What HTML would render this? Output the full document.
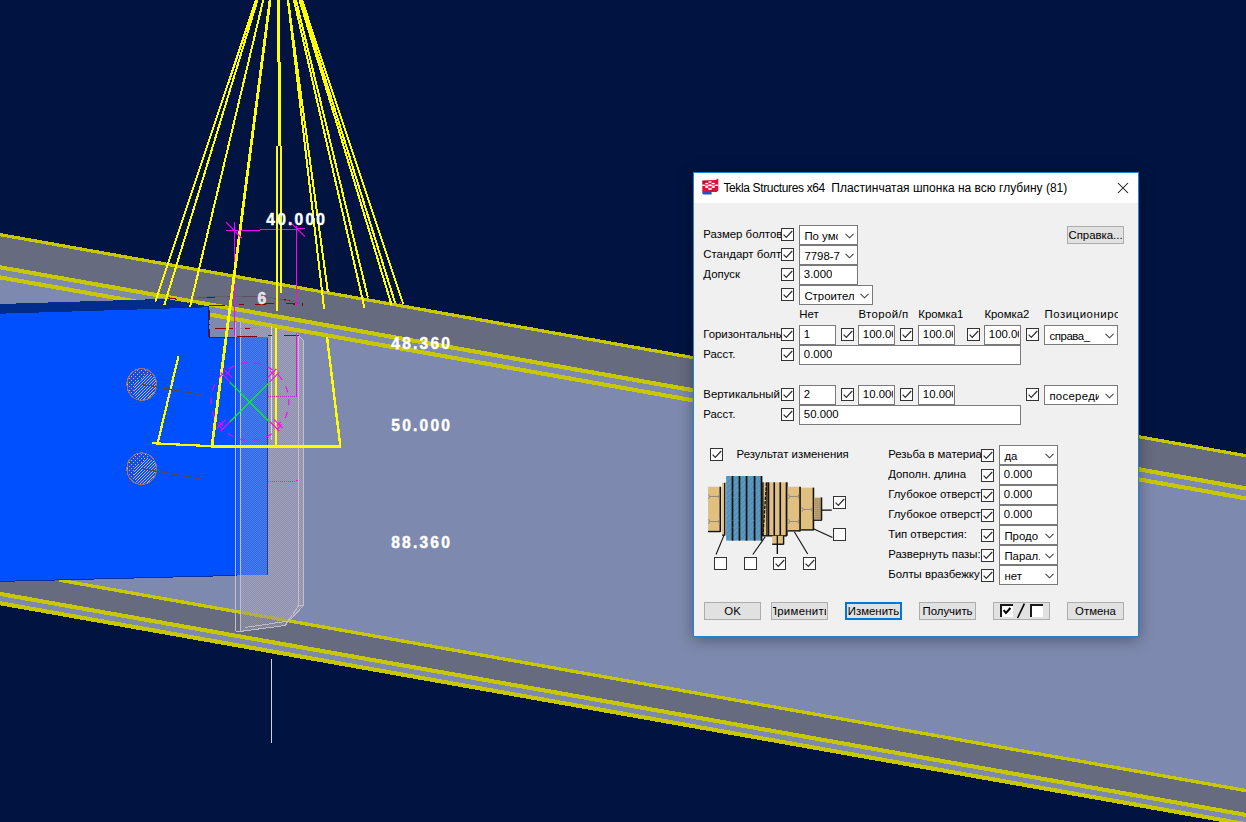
<!DOCTYPE html>
<html><head><meta charset="utf-8"><title>Tekla Structures</title>
<style>
html,body{margin:0;padding:0;}
body{width:1246px;height:822px;overflow:hidden;background:#001341;position:relative;font-family:"Liberation Sans",sans-serif;}
.dim{position:absolute;font:bold 15.6px "Liberation Sans",sans-serif;color:#fff;letter-spacing:2.2px;line-height:18px;white-space:nowrap;-webkit-text-stroke:0.45px #fff;}

.win{position:absolute;left:693px;top:172px;width:444px;height:463px;border:1px solid #1a84d8;background:#f0f0f0;box-shadow:0 3px 14px 0 rgba(0,0,0,0.34);}
.tbar{position:absolute;left:694px;top:173px;width:444px;height:30px;background:#fff;}
.title{position:absolute;left:723.4px;top:180.8px;font-size:12px;line-height:15px;color:#000;white-space:nowrap;transform:scaleY(1.06);transform-origin:0 11.5px;}
.lbl{position:absolute;font-size:11.4px;line-height:14px;height:15px;color:#000;white-space:nowrap;overflow:hidden;}
.cb{position:absolute;width:11px;height:11px;border:1px solid #333;background:#fff;}
.inp{position:absolute;border:1px solid #7a7a7a;background:#fff;font-size:11.4px;color:#000;white-space:nowrap;overflow:hidden;}
.inp span{position:absolute;left:3.8px;top:0.9px;line-height:14px;height:15px;overflow:hidden;white-space:nowrap;}
.btn{position:absolute;border:1px solid #adadad;background:#e1e1e1;font-size:11.4px;color:#000;text-align:center;white-space:nowrap;overflow:hidden;}
.btn.foc{border:2px solid #0078d7;}

</style></head><body>
<svg width="1246" height="822" viewBox="0 0 1246 822" shape-rendering="crispEdges" style="position:absolute;left:0;top:0">
<defs><pattern id="ckWeb" width="2" height="2" patternUnits="userSpaceOnUse"><rect width="2" height="2" fill="#8c90b0"/><rect x="0" y="0" width="1" height="1" fill="#a3a0ba"/><rect x="1" y="1" width="1" height="1" fill="#a3a0ba"/></pattern><pattern id="ckBlue" width="2" height="2" patternUnits="userSpaceOnUse"><rect width="2" height="2" fill="#2c66ee"/><rect x="0" y="0" width="1" height="1" fill="#4f80e4"/><rect x="1" y="1" width="1" height="1" fill="#4f80e4"/></pattern><pattern id="ckGray" width="2" height="2" patternUnits="userSpaceOnUse"><rect width="2" height="2" fill="#7b7d92"/><rect x="0" y="0" width="1" height="1" fill="#8f8fa2"/><rect x="1" y="1" width="1" height="1" fill="#8f8fa2"/></pattern><pattern id="ckSide" width="2" height="2" patternUnits="userSpaceOnUse"><rect width="2" height="2" fill="#0c54f6"/><rect x="0" y="0" width="1" height="1" fill="#2a62e8"/><rect x="1" y="1" width="1" height="1" fill="#2a62e8"/></pattern><pattern id="ckYel" width="2" height="2" patternUnits="userSpaceOnUse"><rect width="2" height="2" fill="#b8b438"/><rect x="0" y="0" width="1" height="1" fill="#a8a468"/><rect x="1" y="1" width="1" height="1" fill="#a8a468"/></pattern></defs>
<polygon points="0.0,234.7 1246.0,455.7 1246.0,824.2 0.0,603.2" fill="#7d89ae" />
<polygon points="0.0,578.0 59.0,578.0 59.0,580.1 1246.0,790.6 1246.0,814.9 0.0,593.9" fill="#676b80" />
<polygon points="59.0,578.4 1246.0,788.9 1246.0,792.3 59.0,581.8" fill="#c8c800" />
<polygon points="240.5,320.1 295.7,329.9 303.6,340.8 303.6,606.0 289.0,621.0 285.0,625.5 240.5,631.4" fill="url(#ckWeb)" />
<clipPath id="cpPlate"><polygon points="240.5,320.1 295.7,329.9 303.6,340.8 303.6,606.0 289.0,621.0 285.0,625.5 240.5,631.4"/></clipPath>
<g clip-path="url(#cpPlate)">
<polygon points="230.0,610.4 310.0,624.6 310.0,640.0 230.0,640.0" fill="url(#ckGray)" />
<polygon points="230.0,608.7 310.0,622.9 310.0,626.3 230.0,612.1" fill="url(#ckYel)" />
</g>
<polygon points="0.0,275.3 1246.0,496.3 1246.0,500.5 0.0,279.5" fill="#c8c800" />
<polygon points="0.0,304.0 209.0,297.5 209.0,308.0 0.0,314.0" fill="#002c8c" />
<polygon points="0.0,313.7 208.9,307.3 208.9,336.8 237.0,336.8 237.0,575.4 0.0,581.4" fill="#0050ff" />
<line x1="0.0" y1="581.4" x2="237.0" y2="575.4" stroke="#0030a0" stroke-width="1" />
<line x1="208.9" y1="307.0" x2="208.9" y2="337.3" stroke="#002c8c" stroke-width="1" />
<line x1="208.9" y1="337.3" x2="236.0" y2="337.3" stroke="#002c8c" stroke-width="1" />
<polygon points="237.0,337.3 240.5,337.3 240.5,575.3 237.0,575.4" fill="url(#ckSide)" />
<polygon points="240.5,337.3 267.7,337.3 267.7,574.6 240.5,575.3" fill="url(#ckBlue)" />
<line x1="267.5" y1="338.0" x2="267.5" y2="574.6" stroke="#2a3f88" stroke-width="1" />
<polygon points="209.4,312.4 320.0,332.1 320.0,336.3 209.4,316.6" fill="#c8c800" />
<line x1="235.5" y1="322.0" x2="235.5" y2="631.4" stroke="#c4bcc8" stroke-width="1" />
<line x1="240.5" y1="322.0" x2="240.5" y2="631.4" stroke="#c4bcc8" stroke-width="1" />
<line x1="298.8" y1="336.0" x2="298.8" y2="605.5" stroke="#c4bcc8" stroke-width="1" />
<line x1="303.6" y1="340.8" x2="303.6" y2="605.5" stroke="#c4bcc8" stroke-width="1" />
<line x1="271.5" y1="326.0" x2="271.5" y2="439.6" stroke="#d8d4dc" stroke-width="1" />
<line x1="295.7" y1="332.8" x2="303.6" y2="340.8" stroke="#c4bcc8" stroke-width="1" />
<line x1="303.6" y1="605.5" x2="289.0" y2="621.0" stroke="#c4bcc8" stroke-width="1" />
<line x1="298.8" y1="605.5" x2="303.6" y2="605.5" stroke="#c4bcc8" stroke-width="1" />
<line x1="298.8" y1="605.5" x2="285.0" y2="625.5" stroke="#c4bcc8" stroke-width="1" />
<line x1="289.0" y1="621.0" x2="285.0" y2="625.5" stroke="#c4bcc8" stroke-width="1" />
<line x1="285.0" y1="625.5" x2="240.5" y2="631.4" stroke="#c4bcc8" stroke-width="1" />
<line x1="289.0" y1="621.0" x2="245.0" y2="627.5" stroke="#c4bcc8" stroke-width="1" />
<line x1="235.5" y1="631.4" x2="240.5" y2="631.4" stroke="#c4bcc8" stroke-width="1" />
<polygon points="0.0,234.7 1246.0,455.7 1246.0,488.3 0.0,267.3" fill="#676b80" />
<polygon points="0.0,265.2 1246.0,486.2 1246.0,490.5 0.0,269.4" fill="#c8c800" />
<polygon points="0.0,233.0 1246.0,454.1 1246.0,457.4 0.0,236.3" fill="#c8c800" />
<polygon points="0.0,591.8 1246.0,812.8 1246.0,817.0 0.0,596.0" fill="#c8c800" />
<polygon points="0.0,601.1 1246.0,822.1 1246.0,826.3 0.0,605.3" fill="#c8c800" />
<line x1="168.0" y1="297.8" x2="177.0" y2="299.2" stroke="#8b0000" stroke-width="1.2" />
<line x1="196.8" y1="297.2" x2="214.6" y2="297.2" stroke="#8b0000" stroke-width="1.2" />
<line x1="227.0" y1="296.3" x2="229.5" y2="296.3" stroke="#8b0000" stroke-width="1.2" />
<line x1="242.8" y1="296.2" x2="257.6" y2="296.2" stroke="#8b0000" stroke-width="1.2" />
<line x1="273.6" y1="298.3" x2="275.6" y2="298.3" stroke="#8b0000" stroke-width="1.2" />
<line x1="281.0" y1="299.3" x2="289.7" y2="300.8" stroke="#8b0000" stroke-width="1.2" />
<line x1="286.2" y1="303.2" x2="295.5" y2="304.2" stroke="#8b0000" stroke-width="1.2" />
<line x1="302.5" y1="302.7" x2="302.5" y2="305.8" stroke="#8b0000" stroke-width="1.2" />
<line x1="189.0" y1="303.0" x2="196.3" y2="303.6" stroke="#8b0000" stroke-width="1.2" />
<line x1="209.4" y1="305.6" x2="225.0" y2="305.6" stroke="#8b0000" stroke-width="1.2" />
<line x1="238.5" y1="304.2" x2="243.8" y2="304.2" stroke="#8b0000" stroke-width="1.2" />
<line x1="255.0" y1="304.4" x2="273.6" y2="303.6" stroke="#8b0000" stroke-width="1.2" />
<line x1="215.0" y1="328.4" x2="232.6" y2="328.4" stroke="#8b0000" stroke-width="1.2" />
<line x1="245.0" y1="328.4" x2="250.2" y2="328.4" stroke="#8b0000" stroke-width="1.2" />
<line x1="221.0" y1="337.2" x2="224.6" y2="337.2" stroke="#8b0000" stroke-width="1.2" />
<line x1="237.0" y1="336.2" x2="257.0" y2="336.2" stroke="#8b0000" stroke-width="1.2" />
<line x1="267.6" y1="335.6" x2="271.6" y2="335.6" stroke="#8b0000" stroke-width="1.2" />
<line x1="283.6" y1="335.6" x2="299.0" y2="335.6" stroke="#8b0000" stroke-width="1.2" />
<line x1="209.6" y1="310.0" x2="209.6" y2="337.5" stroke="#8b0000" stroke-width="1.2" stroke-dasharray="10 4 1 4"/>
<line x1="197.0" y1="297.2" x2="262.0" y2="296.0" stroke="#5a5e70" stroke-width="0.8" />
<line x1="262.0" y1="296.0" x2="300.0" y2="303.0" stroke="#5a5e70" stroke-width="0.8" />
<line x1="232.6" y1="328.4" x2="258.0" y2="327.5" stroke="#8a8ea6" stroke-width="0.8" />
<line x1="234.5" y1="222.0" x2="234.5" y2="336.0" stroke="#ff00ff" stroke-width="1" />
<line x1="296.5" y1="225.5" x2="296.5" y2="305.8" stroke="#ff00ff" stroke-width="1" />
<line x1="226.0" y1="230.5" x2="260.0" y2="230.5" stroke="#ff00ff" stroke-width="1" />
<line x1="260.0" y1="229.5" x2="296.5" y2="229.5" stroke="#ff00ff" stroke-width="1" />
<line x1="296.5" y1="228.5" x2="305.0" y2="228.5" stroke="#ff00ff" stroke-width="1" />
<line x1="256.7" y1="-2.0" x2="155.2" y2="301.7" stroke="#ffff00" stroke-width="2" />
<line x1="258.1" y1="-2.0" x2="164.3" y2="305.1" stroke="#ffff00" stroke-width="2" />
<line x1="263.7" y1="-2.0" x2="190.0" y2="306.9" stroke="#ffff00" stroke-width="2" />
<line x1="287.8" y1="-2.0" x2="327.9" y2="292.4" stroke="#ffff00" stroke-width="2" />
<line x1="293.5" y1="-2.0" x2="364.5" y2="308.0" stroke="#ffff00" stroke-width="2" />
<line x1="295.5" y1="-2.0" x2="367.9" y2="297.5" stroke="#ffff00" stroke-width="2" />
<line x1="298.9" y1="-2.0" x2="391.6" y2="305.1" stroke="#ffff00" stroke-width="2" />
<line x1="300.1" y1="-2.0" x2="395.1" y2="302.9" stroke="#ffff00" stroke-width="2" />
<line x1="301.3" y1="-2.0" x2="403.2" y2="304.0" stroke="#ffff00" stroke-width="2" />
<line x1="270.3" y1="-2.0" x2="211.9" y2="446.5" stroke="#ffff00" stroke-width="2.8" />
<line x1="287.6" y1="-2.0" x2="324.2" y2="309.4" stroke="#ffff00" stroke-width="2" />
<line x1="327.0" y1="337.0" x2="340.4" y2="446.5" stroke="#ffff00" stroke-width="2.4" />
<line x1="278.6" y1="-2.0" x2="278.6" y2="62.0" stroke="#ffff00" stroke-width="3.4" />
<line x1="279.5" y1="62.0" x2="279.5" y2="146.0" stroke="#ffff00" stroke-width="3" />
<line x1="280.6" y1="146.0" x2="280.6" y2="293.3" stroke="#ffff00" stroke-width="2" />
<line x1="276.8" y1="146.0" x2="276.8" y2="310.8" stroke="#ffff00" stroke-width="2" />
<line x1="276.0" y1="328.0" x2="276.0" y2="446.0" stroke="#ffff00" stroke-width="2.6" />
<line x1="211.0" y1="446.4" x2="341.4" y2="446.4" stroke="#ffff00" stroke-width="2.6" />
<line x1="152.4" y1="443.2" x2="212.0" y2="446.2" stroke="#ffff00" stroke-width="2.2" />
<line x1="178.4" y1="356.4" x2="157.6" y2="443.4" stroke="#ffff00" stroke-width="2.2" />
<pattern id="dots" width="3" height="3" patternUnits="userSpaceOnUse"><rect width="3" height="3" fill="#0050ff"/><rect x="0" y="2" width="1" height="1" fill="#d9baa4"/><rect x="1" y="1" width="1" height="1" fill="#d9baa4"/><rect x="2" y="0" width="1" height="1" fill="#c8b0a8"/></pattern>
<pattern id="dots2" width="4" height="4" patternUnits="userSpaceOnUse"><rect width="4" height="4" fill="#0050ff"/><rect x="1" y="2" width="1" height="1" fill="#d9baa4"/><rect x="3" y="0" width="1" height="1" fill="#d9baa4"/></pattern>
<ellipse cx="141.7" cy="384.5" rx="14.8" ry="15.8" fill="url(#dots2)" stroke="none"/>
<clipPath id="bc384"><ellipse cx="141.7" cy="384.5" rx="14.8" ry="15.8"/></clipPath>
<g clip-path="url(#bc384)"><ellipse cx="146" cy="388.5" rx="12.5" ry="15" fill="url(#dots)"/><ellipse cx="137" cy="375.5" rx="7" ry="5" fill="url(#dots2)"/></g>
<ellipse cx="141.7" cy="384.5" rx="14.8" ry="15.8" fill="none" stroke="#90787a" stroke-width="1.1"/>
<line x1="142.5" y1="384.5" x2="199.8" y2="394.5" stroke="#4a4a52" stroke-width="1.2" />
<ellipse cx="141.7" cy="468.7" rx="14.8" ry="15.8" fill="url(#dots2)" stroke="none"/>
<clipPath id="bc468"><ellipse cx="141.7" cy="468.7" rx="14.8" ry="15.8"/></clipPath>
<g clip-path="url(#bc468)"><ellipse cx="146" cy="472.7" rx="12.5" ry="15" fill="url(#dots)"/><ellipse cx="137" cy="459.7" rx="7" ry="5" fill="url(#dots2)"/></g>
<ellipse cx="141.7" cy="468.7" rx="14.8" ry="15.8" fill="none" stroke="#90787a" stroke-width="1.1"/>
<line x1="142.5" y1="468.7" x2="199.8" y2="478.7" stroke="#4a4a52" stroke-width="1.2" />
<line x1="226.0" y1="222.2" x2="242.0" y2="238.5" stroke="#ff00ff" stroke-width="1.1" shape-rendering="geometricPrecision"/>
<line x1="289.4" y1="221.3" x2="305.0" y2="236.6" stroke="#ff00ff" stroke-width="1.1" shape-rendering="geometricPrecision"/>
<line x1="296.5" y1="332.8" x2="296.5" y2="397.0" stroke="#ff00ff" stroke-width="1" />
<line x1="268.0" y1="396.5" x2="296.5" y2="396.5" stroke="#ff00ff" stroke-width="1" stroke-dasharray="1 1"/>
<line x1="268.0" y1="481.5" x2="296.0" y2="481.5" stroke="#ff00ff" stroke-width="1" stroke-dasharray="1 1"/>
<polygon points="296.0,480.0 298.0,480.0 298.0,481.0 296.0,481.0" fill="#ff00ff" />
<line x1="398.5" y1="304.5" x2="401.5" y2="301.5" stroke="#ff00ff" stroke-width="1" />
<circle cx="249.9" cy="401.5" r="38.9" fill="none" stroke="#ff00ff" stroke-width="1.15" stroke-dasharray="6.5 7.1" stroke-dashoffset="3" shape-rendering="geometricPrecision"/>
<line x1="229.8" y1="382.1" x2="269.6" y2="422.0" stroke="#00ff00" stroke-width="1.1" shape-rendering="geometricPrecision"/>
<line x1="269.6" y1="382.1" x2="229.8" y2="422.0" stroke="#00ff00" stroke-width="1.1" shape-rendering="geometricPrecision"/>
<line x1="230.1" y1="381.9" x2="220.6" y2="372.4" stroke="#ff00ff" stroke-width="1.1" shape-rendering="geometricPrecision"/>
<line x1="232.2" y1="377.7" x2="223.4" y2="368.8" stroke="#ff00ff" stroke-width="1.1" shape-rendering="geometricPrecision"/>
<line x1="226.0" y1="374.7" x2="229.7" y2="370.9" stroke="#ff00ff" stroke-width="1.1" shape-rendering="geometricPrecision"/>
<line x1="269.7" y1="381.9" x2="279.2" y2="372.4" stroke="#ff00ff" stroke-width="1.1" shape-rendering="geometricPrecision"/>
<line x1="267.6" y1="377.7" x2="276.4" y2="368.8" stroke="#ff00ff" stroke-width="1.1" shape-rendering="geometricPrecision"/>
<line x1="273.8" y1="374.7" x2="270.1" y2="370.9" stroke="#ff00ff" stroke-width="1.1" shape-rendering="geometricPrecision"/>
<line x1="230.1" y1="421.5" x2="220.6" y2="431.0" stroke="#ff00ff" stroke-width="1.1" shape-rendering="geometricPrecision"/>
<line x1="225.9" y1="419.4" x2="217.0" y2="428.2" stroke="#ff00ff" stroke-width="1.1" shape-rendering="geometricPrecision"/>
<line x1="222.9" y1="425.6" x2="219.1" y2="421.9" stroke="#ff00ff" stroke-width="1.1" shape-rendering="geometricPrecision"/>
<line x1="269.7" y1="421.5" x2="279.2" y2="431.0" stroke="#ff00ff" stroke-width="1.1" shape-rendering="geometricPrecision"/>
<line x1="273.9" y1="419.4" x2="282.8" y2="428.2" stroke="#ff00ff" stroke-width="1.1" shape-rendering="geometricPrecision"/>
<line x1="276.9" y1="425.6" x2="280.7" y2="421.9" stroke="#ff00ff" stroke-width="1.1" shape-rendering="geometricPrecision"/>
<line x1="271.4" y1="659.0" x2="271.4" y2="743.0" stroke="#d2d2d6" stroke-width="1.2" />
</svg>

<div class="dim" style="left:266.3px;top:210.5px">40.000</div>
<div class="dim" style="left:391.3px;top:335px">48.360</div>
<div class="dim" style="left:391.3px;top:417px">50.000</div>
<div class="dim" style="left:391.2px;top:534px">88.360</div>
<div class="dim" style="left:257.6px;top:289.5px;color:#dcdce0">6</div>

<div class="win"></div>
<div class="tbar"></div>
<svg style="position:absolute;left:702px;top:178px" width="17" height="18" viewBox="0 0 17 18" shape-rendering="auto">
<defs><linearGradient id="ig" x1="0" y1="0" x2="1" y2="1"><stop offset="0" stop-color="#b00028"/><stop offset="0.45" stop-color="#e0103c"/><stop offset="1" stop-color="#d80c3c"/></linearGradient></defs>
<path d="M0.3 2.4 L13.5 2 L16.3 0.6 L16.3 12.6 L14.5 14 L0.3 14 Z" fill="url(#ig)"/>
<path d="M0.3 14 L9.6 14 L9.6 16.6 L1.6 16.6 Q0.3 16.4 0.3 15 Z" fill="#2a50b8"/>
<g fill="#fff">
<ellipse cx="8" cy="4.0" rx="1.7" ry="0.85"/>
<ellipse cx="4.8" cy="5.5" rx="1.7" ry="0.85"/><ellipse cx="11.2" cy="5.5" rx="1.7" ry="0.85"/>
<rect x="0.3" y="6.9" width="16" height="0.7" opacity="0.85"/>
<ellipse cx="1.6" cy="7.2" rx="1.5" ry="0.8"/><ellipse cx="8" cy="7.2" rx="1.8" ry="0.95"/><ellipse cx="14.6" cy="7.2" rx="1.6" ry="0.8"/>
<ellipse cx="4.8" cy="9.0" rx="1.8" ry="0.95"/><ellipse cx="11.2" cy="9.0" rx="1.8" ry="0.95"/>
<ellipse cx="8" cy="11.0" rx="1.9" ry="1.05"/>
</g></svg>
<div class="title"><span style="letter-spacing:-0.36px">Tekla Structures x64</span><span style="margin-left:6.4px">Пластинчатая шпонка на всю глубину (81)</span></div>
<svg style="position:absolute;left:1117px;top:182px" width="12" height="12" viewBox="0 0 12 12" shape-rendering="auto"><path d="M1 1 L11 11 M11 1 L1 11" stroke="#111" stroke-width="1.05" fill="none"/></svg>
<div class="lbl" style="left:703.3px;top:227px;width:78px;">Размер болтов</div>
<div class="lbl" style="left:703.3px;top:247px;width:78px;">Стандарт болт</div>
<div class="lbl" style="left:703.3px;top:267px;width:78px;">Допуск</div>
<div class="cb" style="left:781px;top:228px"><svg width="11" height="11" viewBox="0 0 11 11" style="position:absolute;left:0;top:0"><path d="M1.6 5.6 L4.3 8.4 L10.2 2" fill="none" stroke="#333" stroke-width="1.3"/></svg></div>
<div class="cb" style="left:781px;top:248px"><svg width="11" height="11" viewBox="0 0 11 11" style="position:absolute;left:0;top:0"><path d="M1.6 5.6 L4.3 8.4 L10.2 2" fill="none" stroke="#333" stroke-width="1.3"/></svg></div>
<div class="cb" style="left:781px;top:268px"><svg width="11" height="11" viewBox="0 0 11 11" style="position:absolute;left:0;top:0"><path d="M1.6 5.6 L4.3 8.4 L10.2 2" fill="none" stroke="#333" stroke-width="1.3"/></svg></div>
<div class="cb" style="left:781px;top:288px"><svg width="11" height="11" viewBox="0 0 11 11" style="position:absolute;left:0;top:0"><path d="M1.6 5.6 L4.3 8.4 L10.2 2" fill="none" stroke="#333" stroke-width="1.3"/></svg></div>
<div class="inp" style="left:799px;top:225px;width:57px;height:18px"><span style="width:33.5px;top:3.1px;left:4.4px;letter-spacing:0px">По умс</span><svg width="9" height="6" viewBox="0 0 9 6" style="position:absolute;right:3.5px;top:6.8px"><path d="M0.5 0.8 L4.5 4.8 L8.5 0.8" fill="none" stroke="#444" stroke-width="1.1"/></svg></div>
<div class="inp" style="left:799px;top:245px;width:57px;height:18px"><span style="width:40px;top:3.1px;left:4.4px;letter-spacing:0px">7798-7</span><svg width="9" height="6" viewBox="0 0 9 6" style="position:absolute;right:3.5px;top:6.8px"><path d="M0.5 0.8 L4.5 4.8 L8.5 0.8" fill="none" stroke="#444" stroke-width="1.1"/></svg></div>
<div class="inp" style="left:799px;top:265px;width:57px;height:18px"><span style="">3.000</span></div>
<div class="inp" style="left:799px;top:285px;width:72px;height:18px"><span style="width:50px;top:3.1px;left:4.4px;letter-spacing:0px">Строител</span><svg width="9" height="6" viewBox="0 0 9 6" style="position:absolute;right:3.5px;top:6.8px"><path d="M0.5 0.8 L4.5 4.8 L8.5 0.8" fill="none" stroke="#444" stroke-width="1.1"/></svg></div>
<div class="btn " style="left:1067px;top:226px;width:55px;height:16px;line-height:16px;">Справка...</div>
<div class="lbl" style="left:799.3px;top:307px;">Нет</div>
<div class="lbl" style="left:858.4px;top:307px;letter-spacing:0.4px;">Второй/п</div>
<div class="lbl" style="left:918.3px;top:307px;">Кромка1</div>
<div class="lbl" style="left:984.4px;top:307px;">Кромка2</div>
<div class="lbl" style="left:1044.4px;top:307px;width:74px;letter-spacing:0.55px;">Позициониро</div>
<div class="lbl" style="left:703.3px;top:327.2px;width:78px;">Горизонтальны</div>
<div class="cb" style="left:781px;top:328px"><svg width="11" height="11" viewBox="0 0 11 11" style="position:absolute;left:0;top:0"><path d="M1.6 5.6 L4.3 8.4 L10.2 2" fill="none" stroke="#333" stroke-width="1.3"/></svg></div>
<div class="inp" style="left:799px;top:325px;width:35px;height:18px"><span style="">1</span></div>
<div class="cb" style="left:841px;top:328px"><svg width="11" height="11" viewBox="0 0 11 11" style="position:absolute;left:0;top:0"><path d="M1.6 5.6 L4.3 8.4 L10.2 2" fill="none" stroke="#333" stroke-width="1.3"/></svg></div>
<div class="inp" style="left:858px;top:325px;width:35px;height:18px"><span style="width:30.5px">100.00</span></div>
<div class="cb" style="left:900px;top:328px"><svg width="11" height="11" viewBox="0 0 11 11" style="position:absolute;left:0;top:0"><path d="M1.6 5.6 L4.3 8.4 L10.2 2" fill="none" stroke="#333" stroke-width="1.3"/></svg></div>
<div class="inp" style="left:918px;top:325px;width:35px;height:18px"><span style="width:30.5px">100.00</span></div>
<div class="cb" style="left:967px;top:328px"><svg width="11" height="11" viewBox="0 0 11 11" style="position:absolute;left:0;top:0"><path d="M1.6 5.6 L4.3 8.4 L10.2 2" fill="none" stroke="#333" stroke-width="1.3"/></svg></div>
<div class="inp" style="left:984px;top:325px;width:35px;height:18px"><span style="width:30.5px">100.00</span></div>
<div class="cb" style="left:1026px;top:328px"><svg width="11" height="11" viewBox="0 0 11 11" style="position:absolute;left:0;top:0"><path d="M1.6 5.6 L4.3 8.4 L10.2 2" fill="none" stroke="#333" stroke-width="1.3"/></svg></div>
<div class="inp" style="left:1044px;top:325px;width:72px;height:18px"><span style="width:50px;top:3.1px;left:4.4px;letter-spacing:-0.4px">справа_</span><svg width="9" height="6" viewBox="0 0 9 6" style="position:absolute;right:3.5px;top:6.8px"><path d="M0.5 0.8 L4.5 4.8 L8.5 0.8" fill="none" stroke="#444" stroke-width="1.1"/></svg></div>
<div class="lbl" style="left:703.3px;top:347.2px;width:78px;">Расст.</div>
<div class="cb" style="left:781px;top:348px"><svg width="11" height="11" viewBox="0 0 11 11" style="position:absolute;left:0;top:0"><path d="M1.6 5.6 L4.3 8.4 L10.2 2" fill="none" stroke="#333" stroke-width="1.3"/></svg></div>
<div class="inp" style="left:799px;top:345px;width:220px;height:18px"><span style="">0.000</span></div>
<div class="lbl" style="left:703.3px;top:387.2px;width:78px;">Вертикальный</div>
<div class="cb" style="left:781px;top:388px"><svg width="11" height="11" viewBox="0 0 11 11" style="position:absolute;left:0;top:0"><path d="M1.6 5.6 L4.3 8.4 L10.2 2" fill="none" stroke="#333" stroke-width="1.3"/></svg></div>
<div class="inp" style="left:799px;top:385px;width:35px;height:18px"><span style="">2</span></div>
<div class="cb" style="left:841px;top:388px"><svg width="11" height="11" viewBox="0 0 11 11" style="position:absolute;left:0;top:0"><path d="M1.6 5.6 L4.3 8.4 L10.2 2" fill="none" stroke="#333" stroke-width="1.3"/></svg></div>
<div class="inp" style="left:858px;top:385px;width:35px;height:18px"><span style="width:30.5px">10.000</span></div>
<div class="cb" style="left:900px;top:388px"><svg width="11" height="11" viewBox="0 0 11 11" style="position:absolute;left:0;top:0"><path d="M1.6 5.6 L4.3 8.4 L10.2 2" fill="none" stroke="#333" stroke-width="1.3"/></svg></div>
<div class="inp" style="left:918px;top:385px;width:35px;height:18px"><span style="width:30.5px">10.000</span></div>
<div class="cb" style="left:1026px;top:388px"><svg width="11" height="11" viewBox="0 0 11 11" style="position:absolute;left:0;top:0"><path d="M1.6 5.6 L4.3 8.4 L10.2 2" fill="none" stroke="#333" stroke-width="1.3"/></svg></div>
<div class="inp" style="left:1044px;top:385px;width:72px;height:18px"><span style="width:50px;top:3.1px;left:4.4px;letter-spacing:0.3px">посереди</span><svg width="9" height="6" viewBox="0 0 9 6" style="position:absolute;right:3.5px;top:6.8px"><path d="M0.5 0.8 L4.5 4.8 L8.5 0.8" fill="none" stroke="#444" stroke-width="1.1"/></svg></div>
<div class="lbl" style="left:703.3px;top:407.2px;width:78px;">Расст.</div>
<div class="cb" style="left:781px;top:408px"><svg width="11" height="11" viewBox="0 0 11 11" style="position:absolute;left:0;top:0"><path d="M1.6 5.6 L4.3 8.4 L10.2 2" fill="none" stroke="#333" stroke-width="1.3"/></svg></div>
<div class="inp" style="left:799px;top:405px;width:220px;height:18px"><span style="">50.000</span></div>
<div class="cb" style="left:710px;top:448px"><svg width="11" height="11" viewBox="0 0 11 11" style="position:absolute;left:0;top:0"><path d="M1.6 5.6 L4.3 8.4 L10.2 2" fill="none" stroke="#333" stroke-width="1.3"/></svg></div>
<div class="lbl" style="left:736.6px;top:447.2px;">Результат изменения</div>
<svg style="position:absolute;left:700px;top:470px" width="150" height="100" viewBox="0 0 150 100" shape-rendering="auto"><defs><pattern id="hat" width="5" height="5" patternUnits="userSpaceOnUse"><rect width="5" height="5" fill="#569ac4"/><path d="M-1 6 L6 -1 M-1 1 L1 -1 M4 6 L6 4" stroke="#5f7f98" stroke-width="0.8"/></pattern></defs><rect x="8.03" y="16.72" width="12.31" height="44.82" fill="#e0bf80" /><line x1="20.33" y1="16.72" x2="20.33" y2="61.81" stroke="#111" stroke-width="1.6" /><line x1="8.03" y1="61.54" x2="20.47" y2="61.54" stroke="#111" stroke-width="1.4" /><rect x="22.07" y="12.71" width="2.68" height="52.44" fill="#e0bf80" /><line x1="24.75" y1="12.71" x2="24.75" y2="65.42" stroke="#111" stroke-width="1.4" /><line x1="22.07" y1="65.15" x2="24.88" y2="65.15" stroke="#111" stroke-width="1.2" /><rect x="26.09" y="6.02" width="35.72" height="64.62" fill="url(#hat)" /><line x1="32.51" y1="6.02" x2="32.51" y2="70.64" stroke="#111" stroke-width="1.7" /><line x1="39.46" y1="6.02" x2="39.46" y2="70.64" stroke="#111" stroke-width="1.7" /><line x1="46.56" y1="6.02" x2="46.56" y2="70.64" stroke="#111" stroke-width="1.7" /><line x1="54.58" y1="6.02" x2="54.58" y2="70.64" stroke="#111" stroke-width="1.7" /><line x1="61.54" y1="6.02" x2="61.54" y2="70.64" stroke="#111" stroke-width="1.7" /><rect x="62.21" y="12.31" width="24.75" height="53.51" fill="#e0bf80" /><line x1="62.88" y1="12.31" x2="62.88" y2="65.82" stroke="#111" stroke-width="1.4" /><line x1="66.89" y1="12.31" x2="66.89" y2="65.82" stroke="#111" stroke-width="1.2" /><line x1="68.49" y1="12.31" x2="68.49" y2="65.82" stroke="#111" stroke-width="1.6" /><line x1="74.25" y1="12.31" x2="74.25" y2="65.82" stroke="#111" stroke-width="1.6" /><line x1="80.27" y1="12.31" x2="80.27" y2="65.82" stroke="#111" stroke-width="1.6" /><line x1="86.69" y1="12.31" x2="86.69" y2="65.82" stroke="#111" stroke-width="2.0" /><line x1="66.49" y1="12.71" x2="62.88" y2="65.55" stroke="#111" stroke-width="1.4" stroke-dasharray="3.4 1.2"/><line x1="62.21" y1="65.82" x2="86.96" y2="65.82" stroke="#111" stroke-width="1.4" /><rect x="72.24" y="65.82" width="11.37" height="8.43" fill="#e0bf80" /><line x1="83.61" y1="65.82" x2="83.61" y2="74.38" stroke="#111" stroke-width="1.4" /><line x1="72.24" y1="74.25" x2="83.75" y2="74.25" stroke="#111" stroke-width="1.4" /><rect x="87.63" y="16.72" width="12.44" height="44.15" fill="#e0bf80" /><line x1="100.07" y1="16.72" x2="100.07" y2="61.14" stroke="#111" stroke-width="1.6" /><line x1="87.63" y1="60.87" x2="100.20" y2="60.87" stroke="#111" stroke-width="1.4" /><rect x="101.00" y="17.66" width="12.44" height="42.27" fill="#e0bf80" /><line x1="113.44" y1="17.66" x2="113.44" y2="60.20" stroke="#111" stroke-width="1.6" /><line x1="101.00" y1="59.93" x2="113.58" y2="59.93" stroke="#111" stroke-width="1.4" /><rect x="113.98" y="27.42" width="7.49" height="22.74" fill="#d8b878" /><line x1="121.47" y1="27.42" x2="121.47" y2="50.43" stroke="#111" stroke-width="1.6" /><line x1="113.98" y1="50.17" x2="121.61" y2="50.17" stroke="#111" stroke-width="1.4" /><line x1="114.25" y1="29.16" x2="121.20" y2="29.16" stroke="#8c7c68" stroke-width="0.8" /><line x1="114.25" y1="31.17" x2="121.20" y2="31.17" stroke="#8c7c68" stroke-width="0.8" /><line x1="114.25" y1="33.18" x2="121.20" y2="33.18" stroke="#8c7c68" stroke-width="0.8" /><line x1="114.25" y1="35.18" x2="121.20" y2="35.18" stroke="#8c7c68" stroke-width="0.8" /><line x1="114.25" y1="37.19" x2="121.20" y2="37.19" stroke="#8c7c68" stroke-width="0.8" /><line x1="114.25" y1="39.20" x2="121.20" y2="39.20" stroke="#8c7c68" stroke-width="0.8" /><line x1="114.25" y1="41.20" x2="121.20" y2="41.20" stroke="#8c7c68" stroke-width="0.8" /><line x1="114.25" y1="43.21" x2="121.20" y2="43.21" stroke="#8c7c68" stroke-width="0.8" /><line x1="114.25" y1="45.22" x2="121.20" y2="45.22" stroke="#8c7c68" stroke-width="0.8" /><line x1="114.25" y1="47.22" x2="121.20" y2="47.22" stroke="#8c7c68" stroke-width="0.8" /><line x1="114.25" y1="49.23" x2="121.20" y2="49.23" stroke="#8c7c68" stroke-width="0.8" /><line x1="115.85" y1="28.09" x2="115.85" y2="49.77" stroke="#a89068" stroke-width="0.7" /><line x1="117.73" y1="28.09" x2="117.73" y2="49.77" stroke="#a89068" stroke-width="0.7" /><line x1="119.60" y1="28.09" x2="119.60" y2="49.77" stroke="#a89068" stroke-width="0.7" /><line x1="9.63" y1="26.49" x2="18.46" y2="26.49" stroke="#8c8478" stroke-width="0.9" /><path d="M8.49 24.09 q2.2 2.4 0 4.8 M19.60 24.09 q-2.2 2.4 0 4.8" fill="none" stroke="#8c8478" stroke-width="0.9"/><line x1="9.63" y1="51.51" x2="18.46" y2="51.51" stroke="#8c8478" stroke-width="0.9" /><path d="M8.49 49.11 q2.2 2.4 0 4.8 M19.60 49.11 q-2.2 2.4 0 4.8" fill="none" stroke="#8c8478" stroke-width="0.9"/><line x1="89.63" y1="26.49" x2="97.93" y2="26.49" stroke="#8c8478" stroke-width="0.9" /><path d="M88.49 24.09 q2.2 2.4 0 4.8 M99.06 24.09 q-2.2 2.4 0 4.8" fill="none" stroke="#8c8478" stroke-width="0.9"/><line x1="89.63" y1="51.51" x2="97.93" y2="51.51" stroke="#8c8478" stroke-width="0.9" /><path d="M88.49 49.11 q2.2 2.4 0 4.8 M99.06 49.11 q-2.2 2.4 0 4.8" fill="none" stroke="#8c8478" stroke-width="0.9"/><line x1="103.01" y1="39.46" x2="111.30" y2="39.46" stroke="#8c8478" stroke-width="0.9" /><path d="M101.87 37.06 q2.2 2.4 0 4.8 M112.44 37.06 q-2.2 2.4 0 4.8" fill="none" stroke="#8c8478" stroke-width="0.9"/><line x1="27.42" y1="20.74" x2="60.87" y2="20.74" stroke="#6f8ea8" stroke-width="0.6" stroke-dasharray="2 3"/><line x1="27.42" y1="27.42" x2="60.87" y2="27.42" stroke="#6f8ea8" stroke-width="0.6" stroke-dasharray="2 3"/><line x1="27.42" y1="50.57" x2="60.87" y2="50.57" stroke="#6f8ea8" stroke-width="0.6" stroke-dasharray="2 3"/><line x1="27.42" y1="57.26" x2="60.87" y2="57.26" stroke="#6f8ea8" stroke-width="0.6" stroke-dasharray="2 3"/><line x1="121.47" y1="40.13" x2="131.77" y2="40.13" stroke="#111" stroke-width="1.3" /><line x1="113.44" y1="58.86" x2="132.44" y2="67.56" stroke="#111" stroke-width="1.1" /><line x1="24.08" y1="65.15" x2="16.05" y2="84.55" stroke="#111" stroke-width="1.1" /><line x1="65.15" y1="66.89" x2="52.84" y2="84.55" stroke="#111" stroke-width="1.1" /><line x1="77.32" y1="65.82" x2="77.32" y2="84.01" stroke="#111" stroke-width="1.4" /><line x1="94.31" y1="61.81" x2="107.69" y2="84.01" stroke="#111" stroke-width="1.1" /></svg>
<div class="cb" style="left:714px;top:557px"></div>
<div class="cb" style="left:744px;top:557px"></div>
<div class="cb" style="left:773px;top:557px"><svg width="11" height="11" viewBox="0 0 11 11" style="position:absolute;left:0;top:0"><path d="M1.6 5.6 L4.3 8.4 L10.2 2" fill="none" stroke="#333" stroke-width="1.3"/></svg></div>
<div class="cb" style="left:803px;top:557px"><svg width="11" height="11" viewBox="0 0 11 11" style="position:absolute;left:0;top:0"><path d="M1.6 5.6 L4.3 8.4 L10.2 2" fill="none" stroke="#333" stroke-width="1.3"/></svg></div>
<div class="cb" style="left:833px;top:496px"><svg width="11" height="11" viewBox="0 0 11 11" style="position:absolute;left:0;top:0"><path d="M1.6 5.6 L4.3 8.4 L10.2 2" fill="none" stroke="#333" stroke-width="1.3"/></svg></div>
<div class="cb" style="left:833px;top:528px"></div>
<div class="lbl" style="left:888.2px;top:447.2px;width:93px;">Резьба в материа</div>
<div class="cb" style="left:981px;top:448.5px"><svg width="11" height="11" viewBox="0 0 11 11" style="position:absolute;left:0;top:0"><path d="M1.6 5.6 L4.3 8.4 L10.2 2" fill="none" stroke="#333" stroke-width="1.3"/></svg></div>
<div class="inp" style="left:999px;top:445px;width:57px;height:18px"><span style="width:20px;top:3.1px;left:4.4px;letter-spacing:0px">да</span><svg width="9" height="6" viewBox="0 0 9 6" style="position:absolute;right:3.5px;top:6.8px"><path d="M0.5 0.8 L4.5 4.8 L8.5 0.8" fill="none" stroke="#444" stroke-width="1.1"/></svg></div>
<div class="lbl" style="left:888.2px;top:467.2px;width:93px;">Дополн. длина</div>
<div class="cb" style="left:981px;top:468.5px"><svg width="11" height="11" viewBox="0 0 11 11" style="position:absolute;left:0;top:0"><path d="M1.6 5.6 L4.3 8.4 L10.2 2" fill="none" stroke="#333" stroke-width="1.3"/></svg></div>
<div class="inp" style="left:999px;top:465px;width:57px;height:18px"><span style="">0.000</span></div>
<div class="lbl" style="left:888.2px;top:487.2px;width:93px;">Глубокое отверст</div>
<div class="cb" style="left:981px;top:488.5px"><svg width="11" height="11" viewBox="0 0 11 11" style="position:absolute;left:0;top:0"><path d="M1.6 5.6 L4.3 8.4 L10.2 2" fill="none" stroke="#333" stroke-width="1.3"/></svg></div>
<div class="inp" style="left:999px;top:485px;width:57px;height:18px"><span style="">0.000</span></div>
<div class="lbl" style="left:888.2px;top:507.2px;width:93px;">Глубокое отверст</div>
<div class="cb" style="left:981px;top:508.5px"><svg width="11" height="11" viewBox="0 0 11 11" style="position:absolute;left:0;top:0"><path d="M1.6 5.6 L4.3 8.4 L10.2 2" fill="none" stroke="#333" stroke-width="1.3"/></svg></div>
<div class="inp" style="left:999px;top:505px;width:57px;height:18px"><span style="">0.000</span></div>
<div class="lbl" style="left:888.2px;top:527.2px;width:93px;">Тип отверстия:</div>
<div class="cb" style="left:981px;top:528.5px"><svg width="11" height="11" viewBox="0 0 11 11" style="position:absolute;left:0;top:0"><path d="M1.6 5.6 L4.3 8.4 L10.2 2" fill="none" stroke="#333" stroke-width="1.3"/></svg></div>
<div class="inp" style="left:999px;top:525px;width:57px;height:18px"><span style="width:35px;top:3.1px;left:4.4px;letter-spacing:0px">Продо</span><svg width="9" height="6" viewBox="0 0 9 6" style="position:absolute;right:3.5px;top:6.8px"><path d="M0.5 0.8 L4.5 4.8 L8.5 0.8" fill="none" stroke="#444" stroke-width="1.1"/></svg></div>
<div class="lbl" style="left:888.2px;top:547.2px;width:93px;">Развернуть пазы:</div>
<div class="cb" style="left:981px;top:548.5px"><svg width="11" height="11" viewBox="0 0 11 11" style="position:absolute;left:0;top:0"><path d="M1.6 5.6 L4.3 8.4 L10.2 2" fill="none" stroke="#333" stroke-width="1.3"/></svg></div>
<div class="inp" style="left:999px;top:545px;width:57px;height:18px"><span style="width:36px;top:3.1px;left:4.4px;letter-spacing:0px">Парал.</span><svg width="9" height="6" viewBox="0 0 9 6" style="position:absolute;right:3.5px;top:6.8px"><path d="M0.5 0.8 L4.5 4.8 L8.5 0.8" fill="none" stroke="#444" stroke-width="1.1"/></svg></div>
<div class="lbl" style="left:888.2px;top:567.2px;width:93px;">Болты вразбежку</div>
<div class="cb" style="left:981px;top:568.5px"><svg width="11" height="11" viewBox="0 0 11 11" style="position:absolute;left:0;top:0"><path d="M1.6 5.6 L4.3 8.4 L10.2 2" fill="none" stroke="#333" stroke-width="1.3"/></svg></div>
<div class="inp" style="left:999px;top:565px;width:57px;height:18px"><span style="width:20px;top:3.1px;left:4.4px;letter-spacing:0px">нет</span><svg width="9" height="6" viewBox="0 0 9 6" style="position:absolute;right:3.5px;top:6.8px"><path d="M0.5 0.8 L4.5 4.8 L8.5 0.8" fill="none" stroke="#444" stroke-width="1.1"/></svg></div>
<div class="btn " style="left:704px;top:602px;width:55px;height:16px;line-height:16px;">OK</div>
<div class="btn " style="left:771px;top:602px;width:55px;height:16px;line-height:16px;"><div style="position:absolute;left:1px;top:0;width:53px;height:16px;overflow:hidden;display:flex;justify-content:center"><span style="letter-spacing:0.3px">Применить</span></div></div>
<div class="btn foc" style="left:845px;top:602px;width:53px;height:14px;line-height:14px">Изменить</div>
<div class="btn " style="left:919px;top:602px;width:55px;height:16px;line-height:16px;">Получить</div>
<div class="btn " style="left:993px;top:602px;width:55px;height:16px;line-height:16px;"><svg width="55" height="16" viewBox="0 0 55 16" style="position:absolute;left:0;top:0" shape-rendering="crispEdges">
<rect x="6" y="1" width="13" height="13" fill="#fff"/><path d="M6 14 V1 H19" fill="none" stroke="#000" stroke-width="0"/>
<rect x="6" y="1" width="13" height="2" fill="#1a1a1a"/><rect x="6" y="1" width="2" height="13" fill="#1a1a1a"/>
<rect x="36" y="1" width="13" height="13" fill="#fff"/><rect x="36" y="1" width="13" height="2" fill="#1a1a1a"/><rect x="36" y="1" width="2" height="13" fill="#1a1a1a"/>
<g shape-rendering="auto"><path d="M9.6 7.2 L12 10 L16.4 5" fill="none" stroke="#000" stroke-width="2"/><path d="M30.4 0.6 L23.6 15" stroke="#000" stroke-width="1.6"/></g></svg></div>
<div class="btn " style="left:1067px;top:602px;width:55px;height:16px;line-height:16px;">Отмена</div>
</body></html>
